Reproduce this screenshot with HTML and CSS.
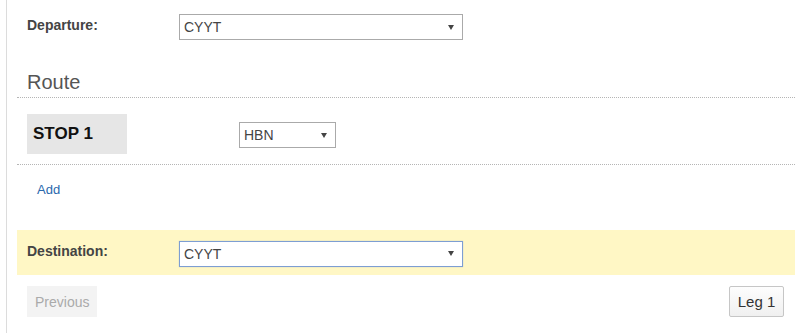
FILE: index.html
```html
<!DOCTYPE html>
<html>
<head>
<meta charset="utf-8">
<link rel="stylesheet" href="styles.css">
</head>
<body>
<div class="page">
  <div class="field-row departure">
    <label class="field-label">Departure:</label>
    <div class="select wide"><span class="select-text">CYYT</span><span class="arrow"></span></div>
  </div>

  <h2 class="section-title">Route</h2>

  <div class="stop-row">
    <div class="stop-name">STOP 1</div>
    <div class="select narrow"><span class="select-text">HBN</span><span class="arrow"></span></div>
  </div>

  <div class="add-row"><a class="add-link" href="#">Add</a></div>

  <div class="field-row destination">
    <label class="field-label">Destination:</label>
    <div class="select wide focused"><span class="select-text">CYYT</span><span class="arrow"></span></div>
  </div>

  <div class="nav-row">
    <button class="btn btn-disabled">Previous</button>
    <button class="btn btn-default">Leg 1</button>
  </div>
</div>
</body>
</html>
```

FILE: styles.css
```css
html, body {
  margin: 0;
  padding: 0;
  background: #fff;
  font-family: "Liberation Sans", Arial, sans-serif;
}

.page {
  margin-left: 6px;
  border-left: 1px solid #dcdcdc;
  padding: 14px 6px 0 10px;
  min-height: 333px;
  box-sizing: border-box;
}

.field-row {
  display: flex;
  align-items: center;
  padding-left: 10px;
}

.field-label {
  width: 152px;
  flex: none;
  font-size: 14px;
  font-weight: bold;
  color: #444;
  margin-top: -4px;
}

.select {
  display: flex;
  align-items: center;
  box-sizing: border-box;
  height: 26px;
  border: 1px solid #aaa;
  background: #fff;
  padding: 0 8px 0 4px;
  font-size: 14px;
  color: #444;
}

.select.wide { width: 284px; }
.select.narrow { width: 97px; }

.select.focused {
  border-color: #7d9ed3;
  box-shadow: 0 0 1px rgba(80, 120, 200, 0.4);
}

.select-text { flex: 1; }

.arrow {
  width: 0;
  height: 0;
  border-left: 3px solid transparent;
  border-right: 3px solid transparent;
  border-top: 5px solid #444;
}

.section-title {
  margin: 31px 0 0;
  padding: 0 0 4px 10px;
  font-size: 20px;
  line-height: 22px;
  font-weight: normal;
  color: #555;
  border-bottom: 1px dotted #b5b5b5;
}

.stop-row {
  display: flex;
  align-items: center;
  padding: 16px 0 10px 10px;
  border-bottom: 1px dotted #b5b5b5;
}

.stop-name {
  box-sizing: border-box;
  width: 100px;
  height: 40px;
  background: #e6e6e6;
  padding-left: 6px;
  display: flex;
  align-items: center;
  font-size: 17px;
  font-weight: bold;
  color: #111;
}

.stop-row .select {
  margin-left: 112px;
  margin-top: 2px;
}

.add-row {
  padding: 17px 0 0 20px;
  height: 65px;
  box-sizing: border-box;
  font-size: 13px;
  line-height: 16px;
}

.add-link {
  color: #2a68ad;
  text-decoration: none;
}

.destination {
  height: 45px;
  background: #fff7c5;
}

.destination .select { margin-top: 2px; }

.nav-row {
  display: flex;
  justify-content: space-between;
  align-items: flex-start;
  padding: 11px 10px 0 10px;
}

.btn {
  box-sizing: border-box;
  height: 31px;
  font-family: "Liberation Sans", Arial, sans-serif;
  font-size: 14px;
  padding: 0 8px;
  white-space: nowrap;
  cursor: default;
}

.btn-disabled {
  width: 70px;
  border: none;
  background: #f3f3f3;
  color: #aaa;
}

.btn-default {
  width: 55px;
  padding: 0;
  border: 1px solid #c6c6c6;
  border-radius: 2px;
  background: linear-gradient(#fdfdfd, #f0f0f0);
  color: #333;
  font-size: 15px;
  margin-right: 1px;
}
```
